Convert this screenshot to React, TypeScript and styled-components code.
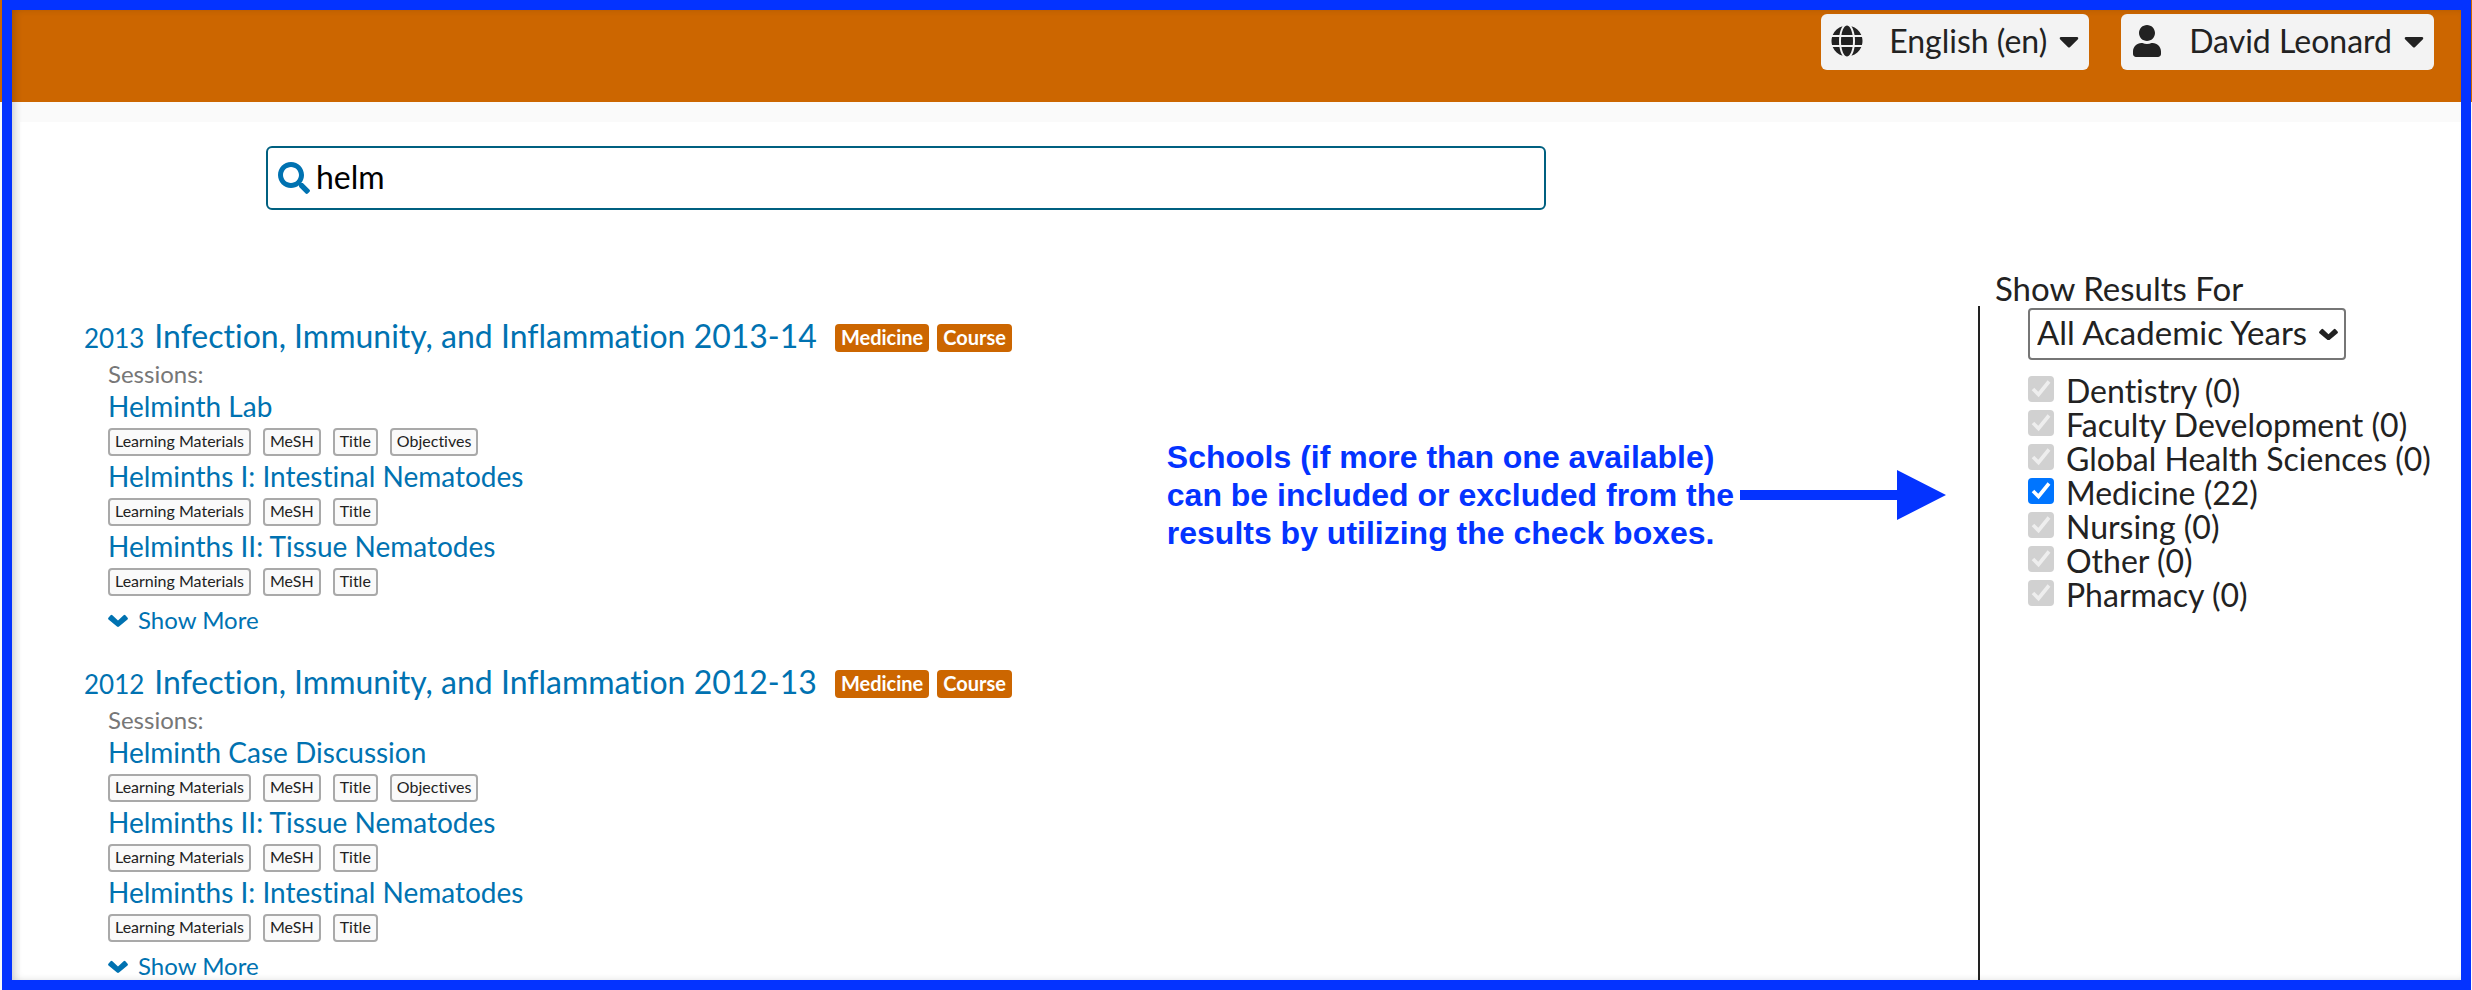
import React, { useState } from "react";
import styled, { createGlobalStyle } from "styled-components";
import { FaCaretDown, FaGlobe, FaSearch, FaUser } from "react-icons/fa";

const GlobalStyle = createGlobalStyle`
  *, *::before, *::after { box-sizing: border-box; }
  body {
    margin: 0;
    background: #fafafa;
    color: #222;
    font-family: Lato, "Liberation Sans", sans-serif;
    font-size: 32px;
    font-variant-ligatures: none;
  }
  button, input, select { font: inherit; font-variant-ligatures: none; color: inherit; }
`;

const Page = styled.div`
  position: relative;
  display: flex;
  flex-direction: column;
  min-height: 100vh;
`;

const Frame = styled.div`
  position: absolute;
  inset: 0 1px 0 2px;
  border: 10px solid #0433ff;
  box-shadow: inset 4px 0 8px -2px rgba(0, 0, 0, 0.2);
  pointer-events: none;
`;

const Header = styled.header`
  display: flex;
  justify-content: flex-end;
  align-items: flex-start;
  gap: 32px;
  height: 102px;
  padding: 14px 38px 0 0;
  background: #cc6600;
`;

const MenuButton = styled.button`
  display: flex;
  align-items: center;
  height: 56px;
  padding: 0 10px 2px;
  border: 0;
  border-radius: 6px;
  background: #f3f3f3;
  line-height: 54px;
  white-space: nowrap;
`;

const MenuIcon = styled.span`
  display: flex;
  margin-right: 26px;

  svg { width: auto; height: 32px; }
`;

const MenuCaret = styled.span`
  display: flex;
  margin-left: 12px;

  svg { width: 20px; height: 32px; }
`;

const Main = styled.main`
  flex: 1;
  display: flex;
  flex-direction: column;
  margin: 20px 0 0 20px;
  background: #fff;
`;

const SearchBox = styled.label`
  display: flex;
  align-items: center;
  gap: 6px;
  width: 60%;
  max-width: 1280px;
  height: 64px;
  margin: 24px 0 60px 246px;
  padding: 0 10px;
  border: 2px solid #006080;
  border-radius: 6px;

  svg { flex: none; width: 32px; height: 32px; color: #0072b1; }
`;

const SearchInput = styled.input`
  flex: 1;
  min-width: 0;
  padding: 0 0 4px;
  border: 0;
  outline: 0;
  background: none;
  color: #000;
`;

const Columns = styled.div`
  flex: 1;
  display: grid;
  grid-template-columns: 1fr auto 494px;
`;

const Results = styled.div`
  display: flex;
  flex-direction: column;
  gap: 26px;
  padding: 46px 0 0 64px;
`;

const Link = styled.a`
  color: #0072b1;
  text-decoration: none;
`;

const CourseTitle = styled.h2`
  display: flex;
  align-items: center;
  margin: 0;
  font-size: 32px;
  font-weight: 400;
  line-height: 40px;
  white-space: nowrap;
`;

const CourseLink = styled(Link)`
  display: flex;
  align-items: baseline;
  gap: 10px;
  margin-right: 18px;
`;

const Year = styled.span`
  font-size: 26px;
`;

const Badge = styled.span`
  height: 28px;
  margin: 2px 8px 0 0;
  padding: 0 6px;
  border-radius: 4px;
  background: #cc6600;
  color: #fff;
  font-size: 20px;
  font-weight: 700;
  line-height: 26px;
`;

const Sessions = styled.div`
  padding-left: 24px;
  font-size: 28px;
  line-height: 32px;
`;

const SessionsLabel = styled.div`
  color: #777;
  font-size: 24px;
`;

const SessionList = styled.ul`
  display: flex;
  flex-direction: column;
  gap: 4px;
  margin: 0;
  padding: 0;
  list-style: none;
`;

const SessionItem = styled.li`
  display: flex;
  flex-direction: column;
  align-items: flex-start;
  gap: 6px;
`;

const Tags = styled.div`
  display: flex;
  gap: 12px;
`;

const Tag = styled.span`
  height: 28px;
  padding: 0 5px;
  border: 2px solid #a9a9a9;
  border-radius: 4px;
  background: #fafafa;
  font-size: 16px;
  line-height: 21px;
`;

const ShowMore = styled.button`
  display: flex;
  align-items: center;
  gap: 10px;
  margin-top: 8px;
  padding: 0;
  border: 0;
  background: none;
  color: #0072b1;
  font-size: 24px;
  line-height: 32px;
`;

const Note = styled.aside`
  display: flex;
  align-items: center;
  gap: 6px;
  align-self: start;
  margin: 168px 32px 0 0;
  color: #0433ff;
`;

const NoteText = styled.p`
  margin: 0;
  font-family: "Liberation Sans", Arial, sans-serif;
  font-size: 32px;
  font-weight: 700;
  line-height: 38px;
  white-space: nowrap;
`;

const Filters = styled.section`
  display: flex;
  flex-direction: column;
`;

const FiltersLabel = styled.label`
  padding-left: 17px;
  font-size: 33px;
  line-height: 36px;
`;

const FiltersBody = styled.div`
  flex: 1;
  padding: 2px 0 0 48px;
  border-left: 2px solid #222;
`;

const SelectBox = styled.div`
  position: relative;
  width: 318px;

  svg {
    position: absolute;
    right: 8px;
    top: 20px;
    pointer-events: none;
  }
`;

const Select = styled.select`
  appearance: none;
  display: block;
  width: 100%;
  height: 52px;
  padding: 0 32px 4px 7px;
  border: 2px solid #767676;
  border-radius: 4px;
  background: #fff;
  font-size: 33px;
`;

const Schools = styled.div`
  margin-top: 14px;
`;

const School = styled.label`
  display: flex;
  gap: 12px;
  line-height: 34px;
  white-space: nowrap;
`;

const CheckMark = styled.span`
  display: grid;
  width: 26px;
  height: 26px;
  margin-top: 2px;

  > * { grid-area: 1 / 1; }
  svg { pointer-events: none; }
`;

const Check = styled.input`
  appearance: none;
  width: 26px;
  height: 26px;
  margin: 0;
  border: 2px solid #767676;
  border-radius: 4px;

  + svg { visibility: hidden; color: #fff; }
  &:checked { border: 0; background: #0075ff; }
  &:checked + svg { visibility: visible; }
  &:disabled { background: #d1d1d1; }
  &:disabled + svg { color: #eee; }
`;

const years = ["All Academic Years", "2013", "2012"];

const schools = [
  { name: "Dentistry", count: 0 },
  { name: "Faculty Development", count: 0 },
  { name: "Global Health Sciences", count: 0 },
  { name: "Medicine", count: 22 },
  { name: "Nursing", count: 0 },
  { name: "Other", count: 0 },
  { name: "Pharmacy", count: 0 },
];

const baseTags = ["Learning Materials", "MeSH", "Title"];

const courses = [
  {
    year: "2013",
    title: "Infection, Immunity, and Inflammation 2013-14",
    sessions: [
      { title: "Helminth Lab", tags: [...baseTags, "Objectives"] },
      { title: "Helminths I: Intestinal Nematodes", tags: baseTags },
      { title: "Helminths II: Tissue Nematodes", tags: baseTags },
    ],
  },
  {
    year: "2012",
    title: "Infection, Immunity, and Inflammation 2012-13",
    sessions: [
      { title: "Helminth Case Discussion", tags: [...baseTags, "Objectives"] },
      { title: "Helminths II: Tissue Nematodes", tags: baseTags },
      { title: "Helminths I: Intestinal Nematodes", tags: baseTags },
    ],
  },
];

function Chevron({ size }: { size: number }) {
  return (
    <svg width={size} height={(size * 13) / 20} viewBox="0 0 20 13" fill="currentColor" aria-hidden="true">
      <path d="M.4 3.8 2.6 1.2q.9-.9 1.8 0L10 6.6l5.6-5.4q.9-.9 1.8 0l2.2 2.6q.7.9-.1 1.7L11 12.6q-1 .8-2 0L.5 5.5q-.8-.8-.1-1.7z" />
    </svg>
  );
}

function Course({ course }: { course: (typeof courses)[number] }) {
  return (
    <article>
      <CourseTitle>
        <CourseLink href="#course">
          <Year>{course.year}</Year>
          {course.title}
        </CourseLink>
        <Badge>Medicine</Badge>
        <Badge>Course</Badge>
      </CourseTitle>
      <Sessions>
        <SessionsLabel>Sessions:</SessionsLabel>
        <SessionList>
          {course.sessions.map((session) => (
            <SessionItem key={session.title}>
              <Link href="#session">{session.title}</Link>
              <Tags>
                {session.tags.map((tag) => (
                  <Tag key={tag}>{tag}</Tag>
                ))}
              </Tags>
            </SessionItem>
          ))}
        </SessionList>
        <ShowMore type="button">
          <Chevron size={20} />
          Show More
        </ShowMore>
      </Sessions>
    </article>
  );
}

function SchoolFilter({ name, count }: { name: string; count: number }) {
  const [checked, setChecked] = useState(true);
  return (
    <School>
      <CheckMark>
        <Check
          type="checkbox"
          checked={checked}
          disabled={count === 0}
          onChange={(e) => setChecked(e.target.checked)}
        />
        <svg width="26" height="26" viewBox="0 0 26 26" fill="none" aria-hidden="true">
          <path d="M5 13l5.5 5.5L21 5.5" stroke="currentColor" strokeWidth="3.6" />
        </svg>
      </CheckMark>
      {name} ({count})
    </School>
  );
}

export default function App() {
  const [query, setQuery] = useState("helm");
  return (
    <Page>
      <GlobalStyle />
      <Header>
        <MenuButton type="button">
          <MenuIcon><FaGlobe /></MenuIcon>
          English (en)
          <MenuCaret><FaCaretDown /></MenuCaret>
        </MenuButton>
        <MenuButton type="button">
          <MenuIcon><FaUser /></MenuIcon>
          David Leonard
          <MenuCaret><FaCaretDown /></MenuCaret>
        </MenuButton>
      </Header>
      <Main>
        <SearchBox>
          <FaSearch />
          <SearchInput
            type="text"
            aria-label="Search"
            value={query}
            onChange={(e) => setQuery(e.target.value)}
          />
        </SearchBox>
        <Columns>
          <Results>
            {courses.map((course) => (
              <Course key={course.year} course={course} />
            ))}
          </Results>
          <Note>
            <NoteText>
              Schools (if more than one available)
              <br />
              can be included or excluded from the
              <br />
              results by utilizing the check boxes.
            </NoteText>
            <svg width="206" height="50" viewBox="0 0 206 50" fill="currentColor" aria-hidden="true">
              <path d="M0 20h157V0l49 25-49 25V30H0z" />
            </svg>
          </Note>
          <Filters>
            <FiltersLabel htmlFor="year">Show Results For</FiltersLabel>
            <FiltersBody>
              <SelectBox>
                <Select id="year">
                  {years.map((year) => (
                    <option key={year}>{year}</option>
                  ))}
                </Select>
                <Chevron size={19} />
              </SelectBox>
              <Schools>
                {schools.map((school) => (
                  <SchoolFilter key={school.name} {...school} />
                ))}
              </Schools>
            </FiltersBody>
          </Filters>
        </Columns>
      </Main>
      <Frame />
    </Page>
  );
}
